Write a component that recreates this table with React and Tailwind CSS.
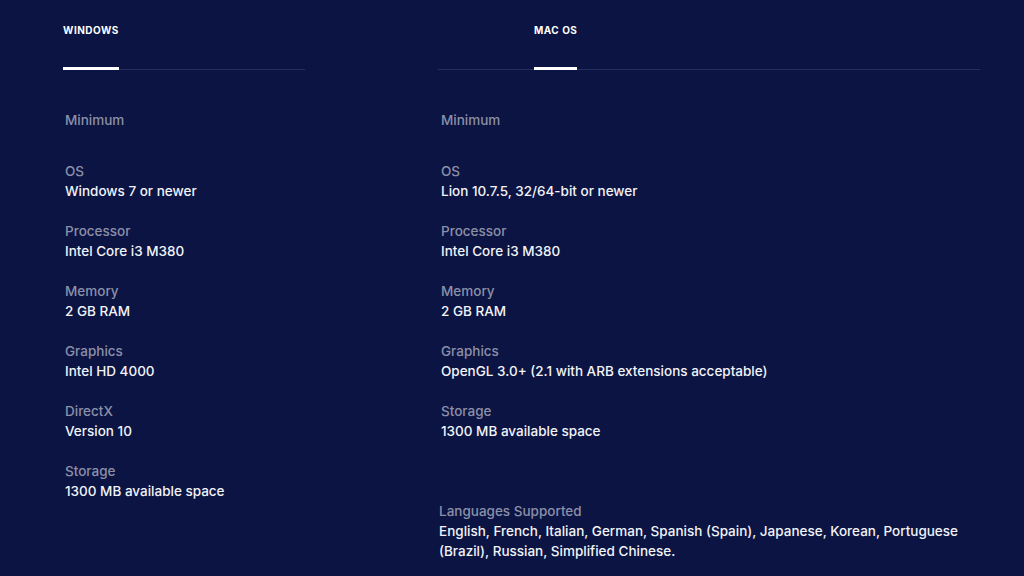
const windowsSpecs = [
  { label: "OS", value: "Windows 7 or newer" },
  { label: "Processor", value: "Intel Core i3 M380" },
  { label: "Memory", value: "2 GB RAM" },
  { label: "Graphics", value: "Intel HD 4000" },
  { label: "DirectX", value: "Version 10" },
  { label: "Storage", value: "1300 MB available space" },
];

const macSpecs = [
  { label: "OS", value: "Lion 10.7.5, 32/64-bit or newer" },
  { label: "Processor", value: "Intel Core i3 M380" },
  { label: "Memory", value: "2 GB RAM" },
  { label: "Graphics", value: "OpenGL 3.0+ (2.1 with ARB extensions acceptable)" },
  { label: "Storage", value: "1300 MB available space" },
];

function Tab({ name, offset }) {
  return (
    <div className={`h-[70px] border-b border-[#262f5c] ${offset}`}>
      <div className="inline-flex flex-col h-full">
        <span className="pt-[24px] text-[10px] font-bold tracking-[0.05em] text-white leading-[12px]">
          {name}
        </span>
        <span className="mt-auto h-[3px] -mb-px bg-white"></span>
      </div>
    </div>
  );
}

function Spec({ label, value }) {
  return (
    <div className="h-[60px]">
      <div className="text-[13.5px] leading-[19px] font-medium text-[#8b90a8]">{label}</div>
      <div className="text-[13.5px] leading-[20px] font-medium text-[#f2f3f7]">{value}</div>
    </div>
  );
}

export default function App() {
  return (
    <div
      className="w-[1024px] h-[576px] overflow-hidden bg-[#0b1443] flex pl-[63px]"
      style={{ fontFamily: "Inter, 'Noto Sans', sans-serif" }}
    >
      <div className="w-[242px]">
        <Tab name="WINDOWS" offset="" />
        <div className="pl-[2px]">
          <div className="pt-[41px] h-[92px] text-[13.5px] leading-[19px] font-medium text-[#8b90a8]">
            Minimum
          </div>
          {windowsSpecs.map((s) => (
            <Spec key={s.label} {...s} />
          ))}
        </div>
      </div>
      <div className="ml-[133px] w-[542px]">
        <Tab name="MAC OS" offset="pl-[96px]" />
        <div className="pl-[3px]">
          <div className="pt-[41px] h-[92px] text-[13.5px] leading-[19px] font-medium text-[#8b90a8]">
            Minimum
          </div>
          {macSpecs.map((s) => (
            <Spec key={s.label} {...s} />
          ))}
        </div>
        <div className="pl-[1px] pt-[40px]">
          <div className="text-[13.5px] leading-[19px] font-medium text-[#8b90a8]">
            Languages Supported
          </div>
          <div className="text-[13.5px] leading-[20px] font-medium text-[#f2f3f7]">
            English, French, Italian, German, Spanish (Spain), Japanese, Korean, Portuguese (Brazil),
            Russian, Simplified Chinese.
          </div>
        </div>
      </div>
    </div>
  );
}
